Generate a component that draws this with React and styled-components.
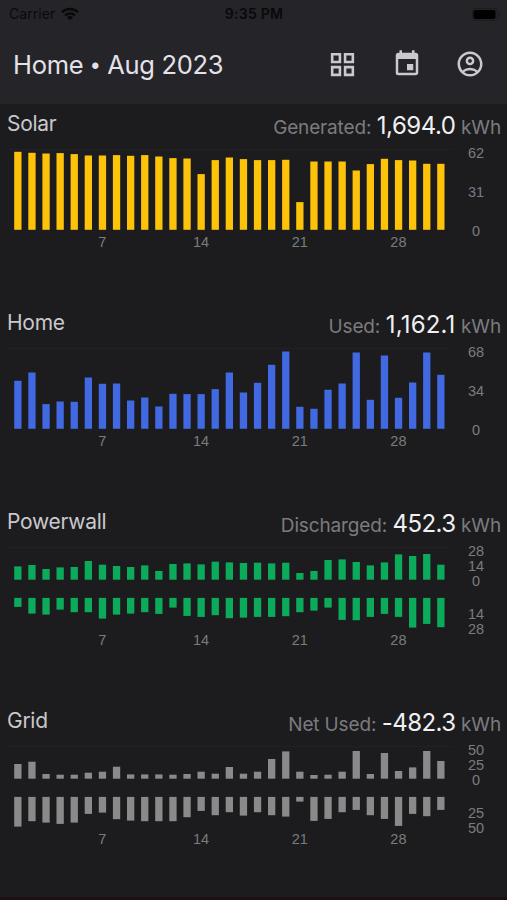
import React from 'react'
import styled, { createGlobalStyle } from 'styled-components'
import { MdEvent, MdGridView, MdOutlineAccountCircle } from 'react-icons/md'

const GlobalStyle = createGlobalStyle`
	body {
		margin: 0;
		background: #1c1c1e;
		font-family: Inter, 'Liberation Sans', sans-serif;
	}
	* {
		box-sizing: border-box;
	}
`

const Screen = styled.div`
	width: 507px;
	height: 900px;
	overflow: hidden;
	display: flex;
	flex-direction: column;
	background: #1c1c1e;
	border-bottom: 3px solid #1b1013;
`

const TopBar = styled.header`
	height: 104px;
	flex: none;
	background: #252429;
`

const StatusBar = styled.div`
	height: 28px;
	display: grid;
	grid-template-columns: 1fr auto 1fr;
	align-items: center;
	padding: 0 6px 0 9px;
	color: #09090a;
	font-size: 14px;
	line-height: 28px;
`

const Carrier = styled.div`
	display: flex;
	align-items: center;
	gap: 6px;
	letter-spacing: 0.05px;
`

const Clock = styled.div`
	font-weight: 600;
	letter-spacing: 0.25px;
	padding-right: 2px;
`

const BatteryIcon = styled.svg`
	justify-self: end;
`

const NavBar = styled.div`
	height: 76px;
	display: flex;
	align-items: center;
	justify-content: space-between;
	padding: 0 22px 4px 13px;
`

const Title = styled.h1`
	margin: 0;
	padding-top: 2px;
	font-size: 25.5px;
	font-weight: 400;
	letter-spacing: -0.3px;
	line-height: 32px;
	color: #e4e2e8;
	white-space: nowrap;
`

const Dot = styled.span`
	font-family: 'Liberation Sans', Arial, sans-serif;
	font-size: 23px;
	margin: 0 1.2px;
	line-height: 1;
`

const Actions = styled.div`
	display: flex;
	align-items: center;
	gap: 33.3px;
	color: #cbc8d0;
	svg {
		display: block;
	}
`

const Section = styled.section`
	height: 199px;
	flex: none;
	color: #7b7b7e;
`

const SectionHeader = styled.div`
	height: 45px;
	display: flex;
	align-items: flex-start;
	justify-content: space-between;
	padding: 6px 6px 0 7px;
	line-height: 28px;
	white-space: nowrap;
`

const Name = styled.h2`
	margin: 0;
	font-size: 21px;
	font-weight: 400;
	letter-spacing: -0.28px;
	color: #c9c8cd;
`

const Total = styled.div`
	display: flex;
	align-items: baseline;
	gap: 5.5px;
	padding-top: 2px;
	font-size: 19px;
	letter-spacing: -0.15px;
`

const Value = styled.span`
	font-size: 24px;
	letter-spacing: ${p => p.$spacing || -0.55}px;
	color: #f0f0f2;
`

const Chart = styled.div`
	display: flex;
	font-family: 'Liberation Sans', Arial, sans-serif;
	font-size: 14.5px;
`

const Plot = styled.div`
	width: 444px;
	margin-left: 8px;
	border-top: 1px solid #212123;
`

const Bars = styled.svg`
	display: block;
	width: 444px;
	height: 80px;
	overflow: visible;
	fill: ${p => p.$color};
`

const Days = styled.div`
	display: grid;
	grid-template-columns: repeat(4, 98.7px);
	margin: 3px 0 0 45px;
	line-height: 18px;
	text-align: center;
	height: 18px;
`

const Axis = styled.div`
	width: 48px;
	display: flex;
	flex-direction: column;
	text-align: center;
	line-height: 15px;
	gap: ${p => p.$gap || 0}px;
	margin-top: -3px;
`

const LowerHalf = styled.div`
	margin-top: 18px;
`

const days = [7, 14, 21, 28]

// bar heights, one per day of the month
const sections = [
	{
		name: 'Solar',
		label: 'Generated:',
		value: '1,694.0',
		spacing: -0.45,
		color: '#fdc30b',
		axis: [62, 31, 0],
		up: [78, 77, 76.3, 76.7, 75.7, 74.3, 74.3, 74.7, 74, 74.7, 73.3, 71.7, 71.3, 55.7, 69.7, 72.3, 70.7, 69.7, 69.7, 70, 27.7, 68.3, 68.3, 68.3, 59.3, 65.7, 71, 69.7, 69.3, 66, 66]
	},
	{
		name: 'Home',
		label: 'Used:',
		value: '1,162.1',
		spacing: 0.2,
		color: '#4169e1',
		axis: [68, 34, 0],
		up: [48, 56.3, 24.7, 27.3, 27, 51.3, 45, 45.3, 28.3, 31.3, 22.3, 35, 34.7, 34.7, 39.7, 56.3, 36.3, 46, 64, 77.3, 22, 20, 39, 45.3, 76.3, 29, 73.3, 31, 46.3, 76.3, 54]
	},
	{
		name: 'Powerwall',
		label: 'Discharged:',
		value: '452.3',
		color: '#0cab5b',
		axis: [28, 14, 0],
		up: [13.3, 14.7, 10.7, 12.3, 12.7, 18.7, 15, 13.7, 12.7, 14.3, 8.7, 15.7, 16.3, 15.3, 18, 17.3, 16.7, 17, 16.3, 17, 6.7, 8.7, 19.7, 20.3, 17.7, 14.3, 17.3, 25.3, 23.7, 25.7, 15],
		down: [9, 15.7, 16.7, 11.7, 14.3, 14.3, 20.7, 16.7, 15.7, 14.3, 16, 9.7, 18, 19, 17.3, 20.3, 19.7, 19, 19, 18.3, 14.3, 12.7, 9.7, 22, 22.3, 19, 16, 19, 29.7, 26, 29.3]
	},
	{
		name: 'Grid',
		label: 'Net Used:',
		value: '-482.3',
		color: '#8b8a8b',
		axis: [50, 25, 0],
		up: [14.7, 17, 4.7, 4, 4, 6, 7, 12, 4.3, 4.3, 4.3, 4, 4.7, 7, 5, 11.7, 5, 7, 19.7, 27.3, 7, 3.7, 4, 7, 27.7, 4.7, 25.7, 7.7, 11.3, 27.7, 17.7],
		down: [29.7, 24.3, 25.7, 27, 25.7, 17, 15.7, 22.3, 23.7, 24.3, 24.3, 24.3, 20.3, 14, 18.3, 15.3, 18.7, 15.3, 18.3, 19.7, 4.7, 24, 22, 15.3, 13, 18.3, 22, 29, 17, 19.3, 13]
	}
]

const WifiIcon = () => (
	<svg width='18' height='14' viewBox='0 0 18 14' fill='none' stroke='currentColor' strokeWidth='2.5'>
		<path d='M1 5.2C5.5 0.9 12.5 0.9 17 5.2' />
		<path d='M4 8.4C6.8 5.8 11.2 5.8 14 8.4' />
		<path d='M9 13.3L5.9 10.2C7.6 8.7 10.4 8.7 12.1 10.2Z' fill='currentColor' stroke='none' />
	</svg>
)

const barX = i => 6.2 + i * 14.1

const BarChart = ({ up, down, color }) => {
	const base = down ? 31.7 : 79.8
	return (
		<Bars $color={color}>
			{up.map((v, i) => (
				<rect key={i} x={barX(i)} y={base - v} width='7.3' height={v} />
			))}
			{down && down.map((v, i) => (
				<rect key={i} x={barX(i)} y='49.9' width='7.3' height={v} />
			))}
		</Bars>
	)
}

const EnergySection = ({ name, label, value, spacing, color, axis, up, down }) => (
	<Section>
		<SectionHeader>
			<Name>{name}</Name>
			<Total>
				<span>{label}</span>
				<Value $spacing={spacing}>{value}</Value>
				<span>kWh</span>
			</Total>
		</SectionHeader>
		<Chart>
			<Plot>
				<BarChart up={up} down={down} color={color} />
				<Days>
					{days.map(d => (
						<span key={d}>{d}</span>
					))}
				</Days>
			</Plot>
			<Axis $gap={down ? 0 : 24}>
				{axis.map(a => (
					<div key={a}>{a}</div>
				))}
				{down && (
					<LowerHalf>
						<div>{axis[1]}</div>
						<div>{axis[0]}</div>
					</LowerHalf>
				)}
			</Axis>
		</Chart>
	</Section>
)

const App = () => (
	<Screen>
		<GlobalStyle />
		<TopBar>
			<StatusBar>
				<Carrier>
					Carrier
					<WifiIcon />
				</Carrier>
				<Clock>9:35 PM</Clock>
				<BatteryIcon width='29' height='13' viewBox='0 0 29 13'>
					<rect x='0.5' y='0.5' width='25' height='12' rx='3.5' fill='none' stroke='#1c1c1f' />
					<rect x='1.5' y='2' width='22' height='9' rx='2' fill='#000' />
					<path d='M27 4.5C28.6 5 28.6 8 27 8.5Z' fill='#17171a' />
				</BatteryIcon>
			</StatusBar>
			<NavBar>
				<Title>
					Home <Dot>•</Dot> Aug 2023
				</Title>
				<Actions>
					<MdGridView size={31} />
					<MdEvent size={30} />
					<MdOutlineAccountCircle size={30} />
				</Actions>
			</NavBar>
		</TopBar>
		{sections.map(s => (
			<EnergySection key={s.name} {...s} />
		))}
	</Screen>
)

export default App
